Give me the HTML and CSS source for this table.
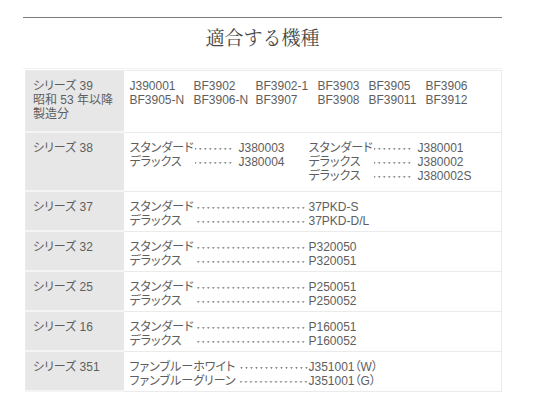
FILE: index.html
```html
<!DOCTYPE html>
<html lang="ja">
<head>
<meta charset="utf-8">
<title>適合する機種</title>
<link rel="stylesheet" href="styles.css">
</head>
<body>
<div class="page">
  <div class="rule"></div>
  <h1 class="title">適合する機種</h1>
  <table class="spec">
    <colgroup><col class="col-series"><col class="col-models"></colgroup>
    <tbody>
      <tr class="row-tall">
        <th>シリーズ 39<br>昭和 53 年以降<br>製造分</th>
        <td>
          <div class="models">
            <span>J390001</span><span>BF3902</span><span>BF3902-1</span><span>BF3903</span><span>BF3905</span><span>BF3906</span>
            <span>BF3905-N</span><span>BF3906-N</span><span>BF3907</span><span>BF3908</span><span>BF39011</span><span>BF3912</span>
          </div>
        </td>
      </tr>
      <tr class="row-mid">
        <th>シリーズ 38</th>
        <td>
          <div class="pair">
            <div class="group">
              <div class="entry"><div class="lead"><span class="name">スタンダード</span><span class="leader"></span></div><span class="code">J380003</span></div>
              <div class="entry"><div class="lead"><span class="name">デラックス　</span><span class="leader"></span></div><span class="code">J380004</span></div>
            </div>
            <div class="group">
              <div class="entry"><div class="lead"><span class="name">スタンダード</span><span class="leader"></span></div><span class="code">J380001</span></div>
              <div class="entry"><div class="lead"><span class="name">デラックス　</span><span class="leader"></span></div><span class="code">J380002</span></div>
              <div class="entry"><div class="lead"><span class="name">デラックス　</span><span class="leader"></span></div><span class="code">J380002S</span></div>
            </div>
          </div>
        </td>
      </tr>
      <tr>
        <th>シリーズ 37</th>
        <td>
          <div class="entry wide"><div class="lead"><span class="name">スタンダード</span><span class="leader"></span></div><span class="code">37PKD-S</span></div>
          <div class="entry wide"><div class="lead"><span class="name">デラックス　</span><span class="leader"></span></div><span class="code">37PKD-D/L</span></div>
        </td>
      </tr>
      <tr>
        <th>シリーズ 32</th>
        <td>
          <div class="entry wide"><div class="lead"><span class="name">スタンダード</span><span class="leader"></span></div><span class="code">P320050</span></div>
          <div class="entry wide"><div class="lead"><span class="name">デラックス　</span><span class="leader"></span></div><span class="code">P320051</span></div>
        </td>
      </tr>
      <tr>
        <th>シリーズ 25</th>
        <td>
          <div class="entry wide"><div class="lead"><span class="name">スタンダード</span><span class="leader"></span></div><span class="code">P250051</span></div>
          <div class="entry wide"><div class="lead"><span class="name">デラックス　</span><span class="leader"></span></div><span class="code">P250052</span></div>
        </td>
      </tr>
      <tr>
        <th>シリーズ 16</th>
        <td>
          <div class="entry wide"><div class="lead"><span class="name">スタンダード</span><span class="leader"></span></div><span class="code">P160051</span></div>
          <div class="entry wide"><div class="lead"><span class="name">デラックス　</span><span class="leader"></span></div><span class="code">P160052</span></div>
        </td>
      </tr>
      <tr>
        <th>シリーズ 351</th>
        <td>
          <div class="entry wide tight"><div class="lead"><span class="name">ファンブルーホワイト </span><span class="leader"></span></div><span class="code">J351001（W）</span></div>
          <div class="entry wide tight"><div class="lead"><span class="name">ファンブルーグリーン </span><span class="leader"></span></div><span class="code">J351001（G）</span></div>
        </td>
      </tr>
    </tbody>
  </table>
</div>
</body>
</html>
```

FILE: styles.css
```css
html, body {
  margin: 0;
  padding: 0;
  background: #ffffff;
}

body {
  font-family: "Liberation Sans", "Noto Sans CJK JP", sans-serif;
  color: #5e5e5e;
}

.page {
  width: 479px;
  margin-left: 23px;
  padding-top: 17px;
}

.rule {
  border-top: 1px solid #7c7c7c;
}

.title {
  margin: 0;
  height: 50px;
  line-height: 38px;
  text-align: center;
  font-family: "Noto Serif CJK JP", "Noto Sans CJK JP", serif;
  font-size: 19px;
  font-weight: normal;
  color: #474747;
  border-bottom: 1px solid #f1f1f1;
}

.spec {
  width: 477px;
  margin: 1px 0 0 2px;
  border-collapse: collapse;
  table-layout: fixed;
  font-size: 12px;
  line-height: 14px;
  font-feature-settings: "palt";
  border: 1px solid #ebebeb;
}

.col-series { width: 98px; }

.spec th,
.spec td {
  vertical-align: top;
  text-align: left;
  font-weight: normal;
  padding: 8px 6px 3px 6px;
  border-bottom: 1px solid #ebebeb;
}

.spec th {
  background: #e7e7e7;
  padding-left: 7px;
  border-bottom-color: #f4f4f4;
  border-bottom-width: 2px;
}

.spec .row-tall th,
.spec .row-tall td {
  padding-bottom: 10px;
}

.spec .row-mid th,
.spec .row-mid td {
  padding-bottom: 8px;
}

.models {
  display: grid;
  grid-template-columns: 64px 62px 62px 51px 57px auto;
}

.pair {
  display: flex;
}

.group {
  width: 179px;
}

.entry {
  display: grid;
  grid-template-columns: 109px auto;
}

.entry.wide {
  grid-template-columns: 179px auto;
}

.lead {
  display: flex;
}

.name {
  white-space: pre;
}

.leader {
  flex: 1;
  margin: 0 6px 0 1px;
  background-image: radial-gradient(circle at 50% 55%, #7a7a7a 0.7px, rgba(122,122,122,0) 1.2px);
  background-size: 5px 100%;
  background-position: right top;
  background-repeat: repeat-x;
}

.entry.wide .leader {
  margin-right: 3px;
}

.entry.tight .leader {
  margin-right: 0;
}

.code {
  white-space: nowrap;
}
```
